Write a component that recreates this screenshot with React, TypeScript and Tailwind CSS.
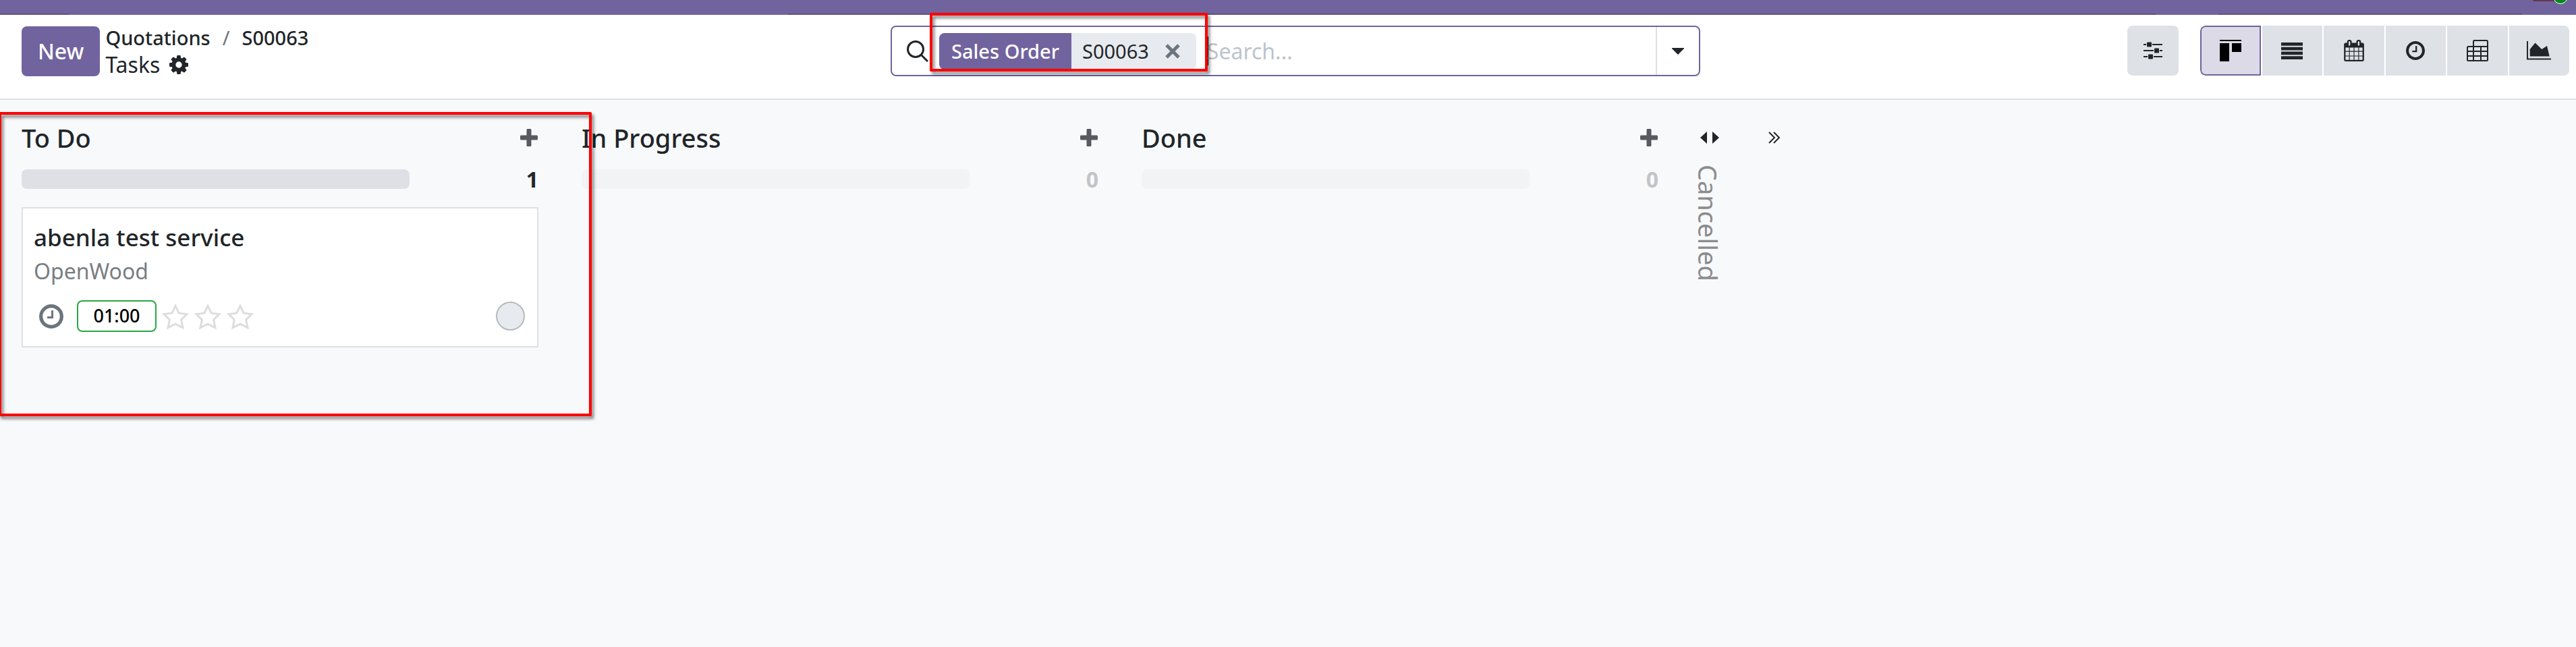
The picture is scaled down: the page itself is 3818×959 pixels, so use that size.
import type { ReactNode } from "react";

const Plus = () => (
  <svg viewBox="0 0 26 26" className="size-[26px]" fill="#575b60"><path d="M11 0h4q1.500 0 1.500 1.500v8h8q1.500 0 1.500 1.500v4q0 1.500-1.500 1.500h-8v8q0 1.500-1.500 1.500h-4q-1.500 0-1.500-1.500v-8h-8q-1.500 0-1.500-1.500v-4q0-1.500 1.500-1.500h8v-8q0-1.500 1.500-1.500z" /></svg>
);

const Cog = () => (
  <svg viewBox="128 128 1536 1536" className="size-7" fill="currentColor"><path d="M1152 896q0-106-75-181t-181-75-181 75-75 181 75 181 181 75 181-75 75-181zm512-109v222q0 12-8 23t-20 13l-185 28q-19 54-39 91 35 50 107 138 10 12 10 25t-9 23q-27 37-99 108t-94 71q-12 0-26-9l-138-108q-44 23-91 38-16 136-29 186-7 28-36 28h-222q-14 0-24.500-8.500t-11.500-21.500l-28-184q-49-16-90-37l-141 107q-10 9-25 9-14 0-25-11-126-114-165-168-7-10-7-23 0-12 8-23 15-21 51-66.500t54-70.500q-27-50-41-99l-183-27q-13-2-21-12.500t-8-23.500v-222q0-12 8-23t19-13l186-28q14-46 39-92-40-57-107-138-10-12-10-24 0-10 9-23 26-36 98.500-107.500t94.500-71.500q13 0 26 10l138 107q44-23 91-38 16-136 29-186 7-28 36-28h222q14 0 24.500 8.500t11.500 21.500l28 184q49 16 90 37l142-107q9-9 24-9 13 0 25 10 129 119 165 170 7 8 7 22 0 12-8 23-15 21-51 66.500t-54 70.500q26 50 41 98l183 28q13 2 21 12.500t8 23.500z" /></svg>
);

const Clock = ({ className }: { className: string }) => (
  <svg viewBox="0 0 1536 1536" className={className} fill="currentColor"><path d="M896 416v448q0 14-9 23t-23 9H544q-14 0-23-9t-9-23v-64q0-14 9-23t23-9h224V416q0-14 9-23t23-9h64q14 0 23 9t9 23zm416 352q0-148-73-273t-198-198-273-73-273 73-198 198-73 273 73 273 198 198 273 73 273-73 198-198 73-273zm224 0q0 209-103 385.500T1153.500 1433 768 1536t-385.500-103T103 1153.500 0 768t103-385.500T382.500 103 768 0t385.500 103T1433 382.500 1536 768z" /></svg>
);

const Star = () => (
  <svg viewBox="0 0 40 38" className="h-[38px] w-10" fill="none" stroke="#dcdddf" strokeWidth="3"><path d="M20 3.500l5.200 10.700 11.800 1.400-8.400 8.300 2.400 11.800-11-5.600-11 5.600 2.400-11.800L3 15.600l11.800-1.400z" /></svg>
);

function Column({ title, count }: { title: string; count: number }) {
  const empty = count === 0;
  return (
    <>
      <div className="flex h-12 items-center justify-between">
        <h2 className="text-[38px] leading-[46px] font-medium">{title}</h2>
        <button type="button" aria-label={"Add to " + title} className="mr-px"><Plus /></button>
      </div>
      <div className="mt-4 flex h-[43px] items-center justify-between">
        <div className={empty ? "h-[29px] w-3/4 rounded-lg bg-[#f2f3f5]" : "h-[29px] w-3/4 rounded-lg bg-[#dee0e5]"} />
        <span className={empty ? "text-[32px] font-bold text-[#c3c4c6]" : "text-[32px] font-bold"}>{count}</span>
      </div>
    </>
  );
}

const views: { name: string; icon: ReactNode }[] = [
  { name: "Kanban", icon: <svg viewBox="0 0 32 32" className="size-8" fill="#000"><path d="M0 0h32v2H0zM0 5h14v27H0zM18 5h14v13H18z" /></svg> },
  { name: "List", icon: <svg viewBox="0 0 32 25" className="h-[25px] w-8" fill="currentColor"><path d="M0 0h32v4.800H0zM0 6.800h32v4.600H0zM0 13.400h32v4.800H0zM0 20.200h32v4.800H0z" /></svg> },
  { name: "Calendar", icon: <svg viewBox="0 0 1664 1792" className="h-8 w-[30px]" fill="currentColor"><path d="M128 1664h288v-288H128v288zm352 0h320v-288H480v288zm-352-352h288V992H128v320zm352 0h320V992H480v320zM128 928h288V640H128v288zm736 736h320v-288H864v288zM480 928h320V640H480v288zm768 736h288v-288h-288v288zm-384-352h320V992H864v320zM512 448V160q0-13-9.500-22.500T480 128h-64q-13 0-22.500 9.500T384 160v288q0 13 9.500 22.500T416 480h64q13 0 22.500-9.500T512 448zm736 864h288V992h-288v320zM864 928h320V640H864v288zm384 0h288V640h-288v288zm32-480V160q0-13-9.500-22.500T1248 128h-64q-13 0-22.500 9.500T1152 160v288q0 13 9.500 22.500t22.500 9.500h64q13 0 22.500-9.500t9.500-22.500zm384-64v1280q0 52-38 90t-90 38H128q-52 0-90-38t-38-90V384q0-52 38-90t90-38h128v-96q0-66 47-113T416 0h64q66 0 113 47t47 113v96h384v-96q0-66 47-113t113-47h64q66 0 113 47t47 113v96h128q52 0 90 38t38 90z" /></svg> },
  { name: "Activity", icon: <Clock className="size-7" /> },
  { name: "Pivot", icon: <svg viewBox="0 0 32 32" className="size-8" fill="none" stroke="currentColor" strokeWidth="2"><path d="M1 11.500q0-1.500 1.500-1.500H31v19.500q0 1.500-1.500 1.500h-27Q1 31 1 29.500zM10 10V2.500Q10 1 11.500 1h18Q31 1 31 2.500V10M10 10v21M21 10v21M1 17h30M1 24h30" /></svg> },
  { name: "Graph", icon: <svg viewBox="0 0 36 28" className="h-7 w-9" fill="currentColor"><path d="M0 0h2v25.500h34v2H0zM4.700 22.500V12l7.800-9.500 9.800 9.500L30 7l3.700 15.500z" /></svg> },
];

export default function App() {
  return (
    <div className="relative min-h-screen overflow-hidden bg-[#f8f9fb] font-['Noto_Sans',sans-serif] text-[#212529]">
      <div className="relative h-[22px] bg-[#71639e]">
        <div className="absolute bottom-0 left-0 h-0.5 w-[102px] bg-[#5f537f]" />
        <div className="absolute right-[623px] bottom-0 left-[1168px] h-0.5 bg-[#5f537f]" />
        <div className="absolute right-20 bottom-0 h-0.5 w-[450px] bg-[#5f537f]" />
        <div className="absolute top-0 right-6 h-0.5 w-10 rounded-bl bg-[#63374f]" />
        <div className="absolute -top-4 right-3 size-[22px] rounded-full border border-white bg-[#008818]" />
      </div>

      <header className="grid h-[126px] grid-cols-[1fr_1200px_1fr] items-start border-b-2 border-[#dee0e5] bg-white pt-4 pr-2.5 pl-8">
        <div className="flex h-[75px] items-center gap-2">
          <button type="button" className="h-[74px] rounded-lg bg-[#71639e] px-6 text-[32px] font-medium text-white">New</button>
          <div className="text-[29px] leading-10">
            <nav className="flex gap-[18px] font-medium">
              <a href="#quotations">Quotations</a>
              <span className="font-normal text-[#6c757d]">/</span>
              <a href="#order">S00063</a>
            </nav>
            <div className="flex items-center gap-[14px] text-[32px] leading-10">Tasks <button type="button" aria-label="Actions"><Cog /></button></div>
          </div>
        </div>

        <div className="flex h-[75px] items-center rounded-lg border-2 border-[#71639e] bg-white">
          <svg viewBox="0 0 32 32" className="ml-[22px] size-8" fill="none" stroke="currentColor" strokeWidth="3"><circle cx="13" cy="13" r="11.500" /><path d="M21 21l10 10" /></svg>
          <div className="ml-4 flex h-[54px] items-center overflow-hidden rounded-lg bg-[#e7eaee] text-[29px]">
            <span className="flex h-full items-center bg-[#71639e] px-[18px] font-medium text-white">Sales Order</span>
            <span className="pl-4">S00063</span>
            <button type="button" aria-label="Remove filter" className="px-6"><svg viewBox="0 0 22 22" className="size-[22px]" stroke="#6c757d" strokeWidth="5"><path d="M2 2l18 18M20 2L2 20" /></svg></button>
          </div>
          <div className="ml-4 h-[43px] w-0.5 bg-black" />
          <input type="text" aria-label="Search" placeholder="Search..." className="-ml-0.5 min-w-0 flex-1 text-[32px] outline-none placeholder:text-[#bdc4cc]" />
          <button type="button" aria-label="Search options" className="flex h-full w-16 items-center justify-center border-l-2 border-[#dee0e5]"><svg viewBox="0 0 18 10" className="h-[10px] w-[18px]" fill="currentColor"><path d="M0 0h18v1L9 10 0 1z" /></svg></button>
        </div>

        <div className="flex justify-end gap-8">
          <button type="button" aria-label="View settings" className="flex h-[74px] w-[76px] items-center justify-center rounded-lg bg-[#dee1e6]">
            <svg viewBox="0 0 28 26" className="h-[26px] w-7" fill="currentColor"><path d="M0 3h4v2H0zM13 3h15v2H13zM0 12h15v2H0zM24 12h4v2H24zM0 21h6v2H0zM15 21h13v2H15z" /><rect x="5" y="0.500" width="7" height="7" rx="1" /><rect x="16" y="9.500" width="7" height="7" rx="1" /><rect x="7" y="18.500" width="7" height="7" rx="1" /></svg>
          </button>
          <div className="grid w-[547px] grid-cols-6 gap-0.5 overflow-hidden rounded-lg">
            {views.map((v, i) => (
              <button key={v.name} type="button" aria-label={v.name} className={i === 0 ? "flex h-[74px] items-center justify-center rounded-l-lg border-2 border-[#71639e] bg-[#dddae7]" : "flex h-[74px] items-center justify-center bg-[#dee1e6]"}>{v.icon}</button>
            ))}
          </div>
        </div>
      </header>

      <main className="flex gap-16 px-8 pt-8">
        <section className="w-[766px]">
          <Column title="To Do" count={1} />
          <article className="mt-5 border-2 border-[#dee0e5] bg-white px-4 pt-5 pb-[21px]">
            <h3 className="text-[35px] leading-[46px] font-medium">abenla test service</h3>
            <p className="text-[32px] leading-[54px] text-[#797e83]">OpenWood</p>
            <div className="mt-4 flex items-center">
              <Clock className="ml-2 size-9 text-[#6c757d]" />
              <span className="ml-5 flex h-[47px] w-[118px] items-center justify-center rounded-lg border-2 border-[#28a745] text-[27px] font-medium text-black">01:00</span>
              <div className="ml-2 flex gap-2"><Star /><Star /><Star /></div>
              <button type="button" aria-label="Status" className="mr-0.5 ml-auto size-[43px] rounded-full border-2 border-[#b7babd] bg-[#e7eaee]" />
            </div>
          </article>
        </section>
        <section className="w-[766px]"><Column title="In Progress" count={0} /></section>
        <section className="w-[766px]"><Column title="Done" count={0} /></section>
        <section className="-ml-1 flex w-8 flex-col items-center">
          <button type="button" aria-label="Unfold" className="flex h-12 items-center"><svg viewBox="0 0 28 18" className="h-[18px] w-7" fill="currentColor"><path d="M10 0v18L0 9zM18 0v18l10-9z" /></svg></button>
          <h2 className="mt-4 mr-1 text-[38px] leading-10 text-[#8b8c8e] [writing-mode:vertical-rl]">Cancelled</h2>
        </section>
        <button type="button" aria-label="Expand" className="ml-[7px] flex h-12 items-center"><svg viewBox="0 0 18 18" className="size-[18px]" fill="none" stroke="currentColor" strokeWidth="2"><path d="M1 1l8 8-8 8M8 1l8 8-8 8" /></svg></button>
      </main>

      <div className="pointer-events-none absolute top-[166px] -left-0.5 h-[451px] w-[879px] rounded-xs border-4 border-[#ff0000] drop-shadow-[3px_4px_2px_rgba(0,0,0,0.5)]" />
      <div className="pointer-events-none absolute top-[19px] left-[1378px] h-[87px] w-[412px] rounded-xs border-4 border-[#ff0000] drop-shadow-[3px_4px_2px_rgba(0,0,0,0.5)]" />
    </div>
  );
}
